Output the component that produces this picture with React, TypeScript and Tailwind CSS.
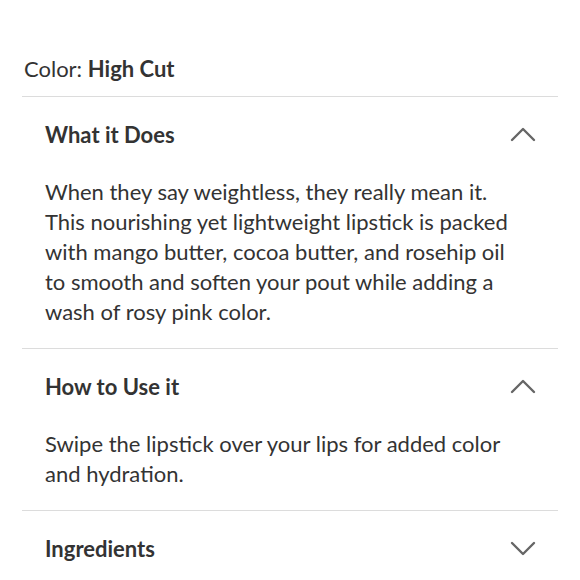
import { useState } from "react";

interface SectionProps {
    title: string;
    lines?: string[];
    open?: boolean;
}

const Chevron = ({ up }: { up: boolean }) => (
    <svg width="26" height="16" viewBox="0 0 26 16" fill="none">
        <path
            d={up ? "M2 14 L13 3 L24 14" : "M2 3 L13 14 L24 3"}
            stroke="#666666"
            strokeWidth="2.4"
            strokeLinecap="round"
            strokeLinejoin="round"
        />
    </svg>
);

const Section: React.FC<SectionProps> = ({ title, lines, open = false }) => {
    const [isOpen, setIsOpen] = useState(open);
    return (
        <div className="border-t border-[#dcdcdc]">
            <div
                onClick={() => setIsOpen(!isOpen)}
                className="h-[74px] pl-[23px] pr-[22px] flex flex-row items-center justify-between cursor-pointer"
            >
                <h2 className="text-[22px] font-bold text-[#333333]">{title}</h2>
                <Chevron up={isOpen} />
            </div>
            {isOpen && lines && (
                <p className="mt-[6px] pb-[21px] pl-[23px] pr-[22px] text-[22px] leading-[30px] text-[#333333] whitespace-nowrap">
                    {lines.map((line, index) => (
                        <span key={index} className="block">
                            {line}
                        </span>
                    ))}
                </p>
            )}
        </div>
    );
};

export default function App() {
    return (
        <div className="w-[580px] h-[580px] bg-white overflow-hidden font-['Lato',sans-serif]">
            <div className="px-[22px] pt-[52px]">
                <div className="pl-[2px] h-[44px] text-[22px] text-[#333333]">
                    Color: <span className="font-bold">High Cut</span>
                </div>
                <Section
                    title="What it Does"
                    open
                    lines={[
                        "When they say weightless, they really mean it.",
                        "This nourishing yet lightweight lipstick is packed",
                        "with mango butter, cocoa butter, and rosehip oil",
                        "to smooth and soften your pout while adding a",
                        "wash of rosy pink color.",
                    ]}
                />
                <Section
                    title="How to Use it"
                    open
                    lines={[
                        "Swipe the lipstick over your lips for added color",
                        "and hydration.",
                    ]}
                />
                <Section title="Ingredients" />
            </div>
        </div>
    );
}
